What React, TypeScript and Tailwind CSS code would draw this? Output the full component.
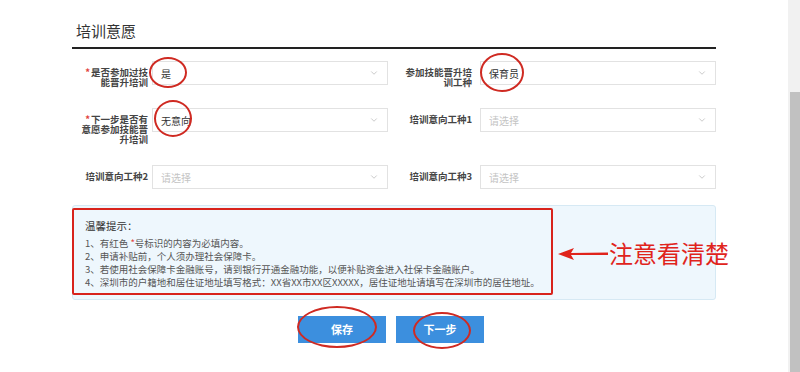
import React from "react";
import { ChevronDown } from "lucide-react";

const cjk = { fontFamily: '"Noto Sans CJK SC", "Noto Sans", sans-serif' };

type SelectProps = {
  value?: string;
};

function FakeSelect({ value }: SelectProps) {
  return (
    <div className="w-[236px] h-[24px] shrink-0 border border-[#e2e2e2] bg-white flex items-center justify-between pl-2 pr-[8px]">
      {value ? (
        <span className="text-[10px] text-[#333]">{value}</span>
      ) : (
        <span className="text-[10px] text-[#c4c4c4]">请选择</span>
      )}
      <ChevronDown size={10} strokeWidth={1.5} className="text-[#aaa]" />
    </div>
  );
}

function Label({ text, required }: { text: string; required?: boolean }) {
  return (
    <div className="w-[69px] pt-[6px] text-right text-[9.5px] leading-[10px] font-bold text-[#444]">
      {required && <span className="text-[#e2413a] mr-[1px]">*</span>}
      {text}
    </div>
  );
}

function Ring({ className }: { className: string }) {
  return (
    <div
      className={
        "absolute border-2 border-[#cf2a22] rounded-[50%] pointer-events-none " +
        className
      }
    />
  );
}

export default function App() {
  return (
    <div className="w-[800px] h-[372px] overflow-hidden bg-white flex" style={cjk}>
      <div className="relative flex-1 pl-[72px] pt-[20px]">
        <div className="w-[644px]">
          <div className="pl-[4px] h-[22px] text-[15px] leading-[22px] text-[#333]">培训意愿</div>
          <div className="mt-[5px] h-[2px] bg-[#222]" />

          {/* 第一行 */}
          <div className="mt-[12px] h-[24px] flex items-start">
            <div className="w-[80px] flex justify-end pr-[4px]">
              <Label text="是否参加过技能晋升培训" required />
            </div>
            <FakeSelect value="是" />
            <div className="w-[92px] flex justify-end pr-[8px]">
              <Label text="参加技能晋升培训工种" />
            </div>
            <FakeSelect value="保育员" />
          </div>

          {/* 第二行 */}
          <div className="mt-[23px] h-[24px] flex items-start">
            <div className="w-[80px] flex justify-end pr-[4px]">
              <Label text="下一步是否有意愿参加技能晋升培训" required />
            </div>
            <FakeSelect value="无意向" />
            <div className="w-[92px] flex justify-end pr-[8px]">
              <Label text="培训意向工种1" />
            </div>
            <FakeSelect />
          </div>

          {/* 第三行 */}
          <div className="mt-[33px] h-[24px] flex items-start">
            <div className="w-[80px] flex justify-end pr-[4px]">
              <Label text="培训意向工种2" />
            </div>
            <FakeSelect />
            <div className="w-[92px] flex justify-end pr-[8px]">
              <Label text="培训意向工种3" />
            </div>
            <FakeSelect />
          </div>

          {/* 温馨提示 */}
          <div className="relative mt-[16px] h-[95px] rounded-[3px] border border-[#d6e9f4] bg-[#eef7fd] pl-[12px] pt-[13px]">
            <div className="text-[10.5px] leading-[14px] text-[#333]">温馨提示：</div>
            <div className="mt-[4px] text-[9.5px] leading-[13px] text-[#555]">
              <div>
                1、有红色 <span className="text-[#e2413a]">*</span>号标识的内容为必填内容。
              </div>
              <div>2、申请补贴前，个人须办理社会保障卡。</div>
              <div>3、若使用社会保障卡金融账号，请到银行开通金融功能，以便补贴资金进入社保卡金融账户。</div>
              <div>4、深圳市的户籍地和居住证地址填写格式：XX省XX市XX区XXXXX，居住证地址请填写在深圳市的居住地址。</div>
            </div>

            <div className="absolute left-[-1px] top-[2px] w-[481px] h-[87px] border-2 border-[#d8231c] rounded-[2px]" />

            <svg
              className="absolute left-[484px] top-[41px]"
              width="52"
              height="14"
              viewBox="0 0 52 14"
            >
              <path d="M1 7 L17 1 L14 6 L51 5.5 L51 8 L14 8 L17 13 Z" fill="#e0241c" />
            </svg>
            <div className="absolute left-[536px] top-[32px] whitespace-nowrap text-[24px] leading-[30px] text-[#e0241c]">
              注意看清楚
            </div>
          </div>

          {/* 按钮 */}
          <div className="mt-[16px] flex justify-center gap-[10px] pr-[6px]">
            <button className="w-[88px] h-[27px] bg-[#3c8fde] text-white text-[11px] font-bold">
              保存
            </button>
            <button className="w-[88px] h-[27px] bg-[#3c8fde] text-white text-[11px] font-bold">
              下一步
            </button>
          </div>
        </div>

        <Ring className="left-[149px] top-[57px] w-[38px] h-[31px]" />
        <Ring className="left-[154px] top-[100px] w-[38px] h-[37px]" />
        <Ring className="left-[480px] top-[53px] w-[44px] h-[39px]" />
        <Ring className="left-[297px] top-[306px] w-[80px] h-[42px]" />
        <Ring className="left-[413px] top-[312px] w-[58px] h-[37px]" />
      </div>

      {/* 滚动条 */}
      <div className="w-[12px] h-full bg-[#f1f1f1] flex flex-col items-end">
        <div className="h-[92px]" />
        <div className="w-[10px] flex-1 bg-[#c1c1c1]" />
      </div>
    </div>
  );
}
